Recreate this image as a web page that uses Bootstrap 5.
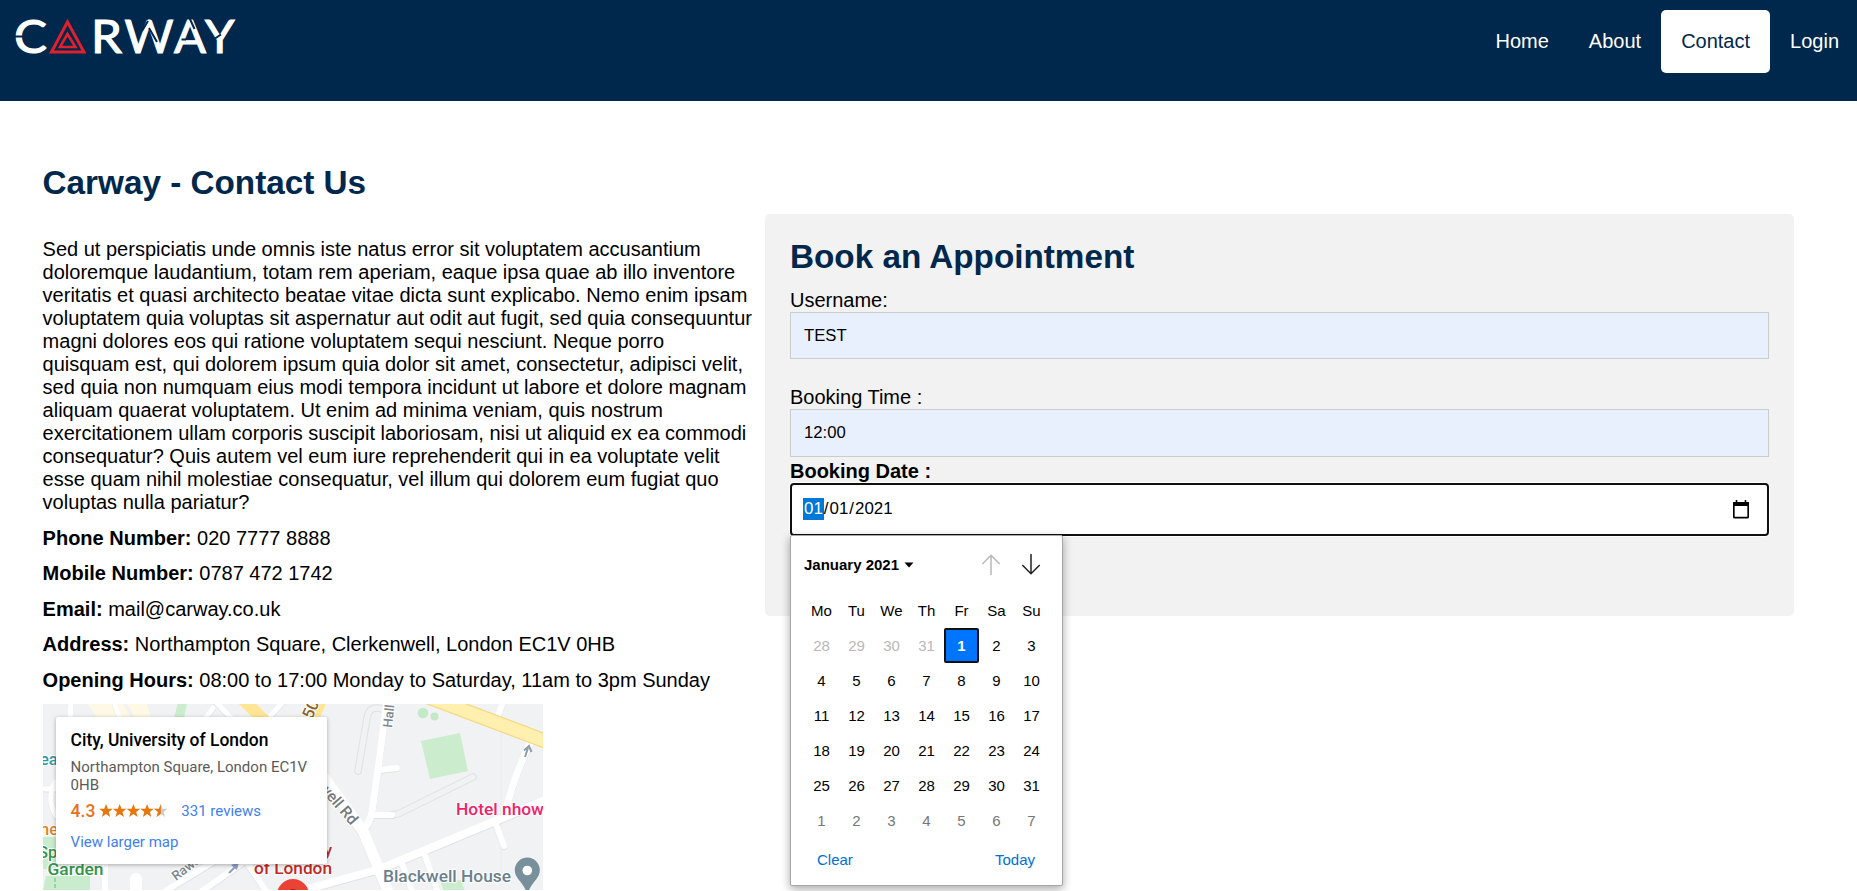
<!DOCTYPE html>
<html lang="en">
<head>
<meta charset="utf-8">
<title>Carway - Contact Us</title>
<link href="https://cdn.jsdelivr.net/npm/bootstrap@5.3.0/dist/css/bootstrap.min.css" rel="stylesheet">
<style>
body{font:20px/23px "Liberation Sans",Arial,sans-serif;color:#000;background:#fff;height:891px;overflow:hidden}
.site-head{background:#00274c;height:101px}
.brand-logo{width:240px;height:80px}
.menu{padding-top:10px;margin-right:-2px}
.menu .nav-link{padding:20px;color:#fff;font-size:20px;line-height:23px;border-radius:5px}
.menu .nav-link.active{background:#fff;color:#00274c}
.info{width:711px;margin-left:42.6px;margin-right:4.4px;padding-top:63px}
h2{color:#00274c;font-size:33.28px;line-height:38px;font-weight:700;margin:0}
.info h2{margin-bottom:36px}
.facts{padding-top:13px;display:grid;row-gap:12.4px;margin-bottom:12.4px}
b{font-weight:700}
.map-box{width:500px;height:186px;background:#f1f2f4}
.map-box svg{display:block}
.place{left:13px;top:13px;width:271px;height:147px;background:#fff;border-radius:2px;box-shadow:0 1px 4px rgba(0,0,0,.3);padding:12px 15px;font-family:Roboto,sans-serif;color:#5b5b5b;font-size:15px;line-height:18px}
.place .ttl{font-size:17.45px;line-height:22px;font-weight:500;color:#000;margin-bottom:7px}
.place a{color:#427fed;text-decoration:none}
.rate{color:#e7711b;font-size:17.5px;font-weight:500}
.book{width:1029px;height:402px;margin:113px 0 0 7px;background:#f2f2f2;border-radius:5px;padding:24px 25px}
.book h2{margin-bottom:13px}
.book label{display:block}
.book .form-control{font-size:16.7px;line-height:19px;color:#000;border:1px solid #ccc;border-radius:0;background:#e8f0fe;padding:13px;height:47px}
.book .time-field{height:48px}
.book .date-field{background:#fff;border:2px solid #101010;border-radius:4px;height:53px;padding:0 18px 2px 11px;box-shadow:0 0 0 1px #fff;font-size:16.9px}
.seg{padding:1px;line-height:20px}
.seg.on{background:#0078d7;color:#fff}
.picker{left:0;top:52px;width:273px;height:351px;background:#fff;border:1px solid #a6a6a6;border-radius:2px;box-shadow:0 3px 10px rgba(0,0,0,.35);font-size:15px;line-height:17px;z-index:5}
.picker-top{height:57px;padding:0 21px 0 13px}
.days{display:grid;grid-template-columns:repeat(7,35px);grid-auto-rows:35px;padding-left:13px}
.days span{display:flex;align-items:center;justify-content:center}
.days .off{color:#b8b8b8}.days .next{color:#767676}
.days .sel{background:#0075ff;border:2px solid #101010;border-radius:2px;color:#fff;font-weight:700}
.picker-foot{color:#0070cf;padding:13px 27px 0 26px}
</style>
</head>
<body>
<header class="site-head d-flex justify-content-between align-items-start">
  <a href="#" aria-label="Carway"><svg class="brand-logo d-block" viewBox="0 0 240 80">
    <g font-family="Lato, sans-serif" font-size="46" fill="#fff" stroke="#fff" stroke-width="1.100">
      <text x="14" y="53" textLength="33" lengthAdjust="spacingAndGlyphs">C</text>
      <text x="91" y="53" textLength="31" lengthAdjust="spacingAndGlyphs">R</text>
      <text x="124.500" y="53" textLength="49" lengthAdjust="spacingAndGlyphs">W</text>
      <text x="174" y="53" textLength="32" lengthAdjust="spacingAndGlyphs">A</text>
      <text x="205" y="53" textLength="29.500" lengthAdjust="spacingAndGlyphs">Y</text>
    </g>
    <g fill="none" stroke="#e0202c"><path d="M67.500 22 51.500 52H84Z" stroke-width="3"/><path d="M67.500 34 60 47H75.500Z" stroke-width="2.600"/></g>
    <g stroke="#00274c" stroke-width="2"><path d="M14 36.500h9M103.500 41v7M142 31l6-10M157 42l-8-14M181.500 39.500h4.500M189.500 18l5 11M215 38.500l6-4"/></g>
  </svg></a>
  <nav class="menu nav">
    <a class="nav-link" href="#">Home</a><a class="nav-link" href="#">About</a><a class="nav-link active" href="#">Contact</a><a class="nav-link" href="#">Login</a>
  </nav>
</header>
<main class="d-flex align-items-start">
  <section class="info flex-shrink-0">
    <h2>Carway - Contact Us</h2>
    <p class="m-0">Sed ut perspiciatis unde omnis iste natus error sit voluptatem accusantium doloremque laudantium, totam rem aperiam, eaque ipsa quae ab illo inventore veritatis et quasi architecto beatae vitae dicta sunt explicabo. Nemo enim ipsam voluptatem quia voluptas sit aspernatur aut odit aut fugit, sed quia consequuntur magni dolores eos qui ratione voluptatem sequi nesciunt. Neque porro quisquam est, qui dolorem ipsum quia dolor sit amet, consectetur, adipisci velit, sed quia non numquam eius modi tempora incidunt ut labore et dolore magnam aliquam quaerat voluptatem. Ut enim ad minima veniam, quis nostrum exercitationem ullam corporis suscipit laboriosam, nisi ut aliquid ex ea commodi consequatur? Quis autem vel eum iure reprehenderit qui in ea voluptate velit esse quam nihil molestiae consequatur, vel illum qui dolorem eum fugiat quo voluptas nulla pariatur?</p>
    <div class="facts">
      <div><b>Phone Number:</b> 020 7777 8888</div>
      <div><b>Mobile Number:</b> 0787 472 1742</div>
      <div><b>Email:</b> mail@carway.co.uk</div>
      <div><b>Address:</b> Northampton Square, Clerkenwell, London EC1V 0HB</div>
      <div><b>Opening Hours:</b> 08:00 to 17:00 Monday to Saturday, 11am to 3pm Sunday</div>
    </div>
    <div class="map-box position-relative overflow-hidden">
      <svg width="500" height="186" viewBox="0 0 500 186" font-family="Roboto, sans-serif">
        <defs><g id="streets" fill="none" stroke-linecap="round" stroke-linejoin="round">
          <path d="M240 30 282 75 320 127 347 192" stroke-width="11"/>
          <path d="M344-5 335 65 329 108Q327 118 320 127" stroke-width="7"/>
          <path d="M337 66 354 64M332 111H349M452 118 461 142M461-5 454 15M382 152 396 192M359 160 371 192" stroke-width="6"/>
          <path d="M505 95 450 118 337 165 290 178 240 192" stroke-width="8"/>
          <path d="M487 39Q470 75 462 110" stroke-width="7"/>
          <path d="M172-3 188 14M170 4 160 18M222 18 242-4M28-5 27 20M70-5 78 18M2 85H14M12 78Q3 95 13 112" stroke-width="5"/>
          <path d="M124 186 175 155 210 145M62 160V192M90 192V177Q90 172 93 172Q96 172 96 177V192M155 190 205 155M205 160 226 192" stroke-width="6"/>
        </g></defs>
        <rect width="500" height="186" fill="#f1f2f4"/>
        <path d="M45 0H80L88 14H54ZM84 0H104L108 14H92Z" fill="#fff8e4"/>
        <path d="M0 133H14V165H0ZM3 172H47V186H0Z" fill="#c9ecce"/>
        <path d="M135-1H144L141 14H131ZM378 37 417 29 425 67 387 75ZM397 177 418 176 422 187H401Z" fill="#cbedcd"/>
        <circle cx="380" cy="9" r="5.300" fill="#c3e9c6"/><circle cx="391.500" cy="12.500" r="4" fill="#c3e9c6"/>
        <g fill="none" stroke-linecap="round"><path d="M339 5Q326 1 324 14L315 67M349 111 355 110 430 73" stroke="#dfe1e6" stroke-width="7.500"/><path d="M339 5Q326 1 324 14L315 67M349 111 355 110 430 73" stroke="#f1f2f4" stroke-width="5.500"/></g>
        <path d="M458 0V186" stroke="#ebecef"/>
        <g transform="translate(0 1)"><use href="#streets" stroke="#dddfe6" opacity=".85"/></g>
        <use href="#streets" stroke="#fff"/>
        <path d="M380-9 510 40" stroke="#f7d77e" stroke-width="15"/><path d="M380-9 510 40" stroke="#fff0b0" stroke-width="12.500"/>
        <path d="M192-12 222 17M280-8 270 14" stroke="#ffe594" stroke-width="12"/>
        <path d="M12 174V186" stroke="#65bd76" stroke-dasharray="4 2"/>
        <path d="M482 53 485 44M481 46.500 486 42 488.500 48" fill="none" stroke="#8e9cab" stroke-width="2"/>
        <path d="M186 169 193 162" stroke="#8b9fc7" stroke-width="2"/><path d="M196 158 194 166 188 161Z" fill="#8b9fc7"/>
        <g stroke="#fff" stroke-width="2" paint-order="stroke" stroke-linejoin="round" font-size="16.500" font-weight="500">
          <text x="-3" y="61" fill="#2999a1">ea</text>
          <text x="-3" y="131" fill="#dd8427">ne</text>
          <text x="-5" y="154" fill="#34934b">Sp</text>
          <text x="4.500" y="171" textLength="56" lengthAdjust="spacingAndGlyphs" fill="#34934b">Garden</text>
          <text transform="translate(133 177) rotate(-37)" font-size="13" fill="#80868b">Rawst</text>
          <text transform="translate(269 16) rotate(-66)" fill="#8a6230">50</text>
          <text transform="translate(349 24) rotate(-84)" font-size="13" fill="#80868b">Hall</text>
          <text transform="translate(270 78) rotate(49)" fill="#747a80" font-size="15.500">swell Rd</text>
          <text x="289" y="152" text-anchor="end" fill="#c5281f">City</text>
          <text x="211" y="169.500" textLength="78" lengthAdjust="spacingAndGlyphs" fill="#c5281f">of London</text>
          <text x="413" y="110.500" textLength="88" lengthAdjust="spacingAndGlyphs" fill="#ed246d">Hotel nhow</text>
          <text x="340" y="178" textLength="128" lengthAdjust="spacingAndGlyphs" fill="#6b7f8a">Blackwell House</text>
        </g>
        <circle cx="250" cy="191" r="16" fill="#ea4335"/><circle cx="250" cy="190" r="5" fill="#b31412"/>
        <path d="M484.300 153.500A12.500 12.500 0 0 1 496.800 166C496.800 175 489 177 484.300 190C480 177 471.800 175 471.800 166A12.500 12.500 0 0 1 484.300 153.500Z" fill="#78909c"/><circle cx="484.300" cy="166.500" r="4.800" fill="#fff"/>
      </svg>
      <div class="place position-absolute">
        <div class="ttl">City, University of London</div>
        <div class="text-nowrap">Northampton Square, London EC1V<br>0HB</div>
        <div class="d-flex align-items-center" style="margin-top:8px"><span class="rate">4.3</span>
          <svg class="ms-1" width="70" height="14" viewBox="0 0 70 14"><defs><path id="st" d="M7 0 8.800 4.800H13.800L9.800 7.900 11.200 13 7 10.100 2.800 13 4.200 7.900.2 4.800H5.200Z"/></defs>
          <g fill="#e7760b"><use href="#st"/><use href="#st" x="13.700"/><use href="#st" x="27.400"/><use href="#st" x="41.100"/></g><use href="#st" x="54.800" fill="#ccc"/><path d="M61.800 0V10.100L57.600 13 59 7.900 55 4.800H60Z" fill="#e7760b"/></svg>
          <a href="#" style="margin-left:12px">331 reviews</a></div>
        <div style="margin-top:13px"><a href="#">View larger map</a></div>
      </div>
    </div>
  </section>
  <section class="book flex-shrink-0">
    <h2>Book an Appointment</h2>
    <label for="u">Username:</label>
    <input id="u" class="form-control" value="TEST">
    <label for="t" style="margin-top:27px">Booking Time :</label>
    <input id="t" class="form-control time-field" value="12:00">
    <label class="fw-bold" style="margin-top:3px">Booking Date :</label>
    <div class="position-relative">
      <div class="form-control date-field d-flex align-items-center">
        <span class="seg on">01</span>/<span class="seg">01</span>/<span class="seg">2021</span>
        <svg class="ms-auto" style="margin-top:2px" width="16" height="19" viewBox="0 0 16 19"><path d="M3.500 0V3M12.500 0V3" stroke="#000" stroke-width="1.600"/><rect x=".8" y="2.800" width="14.400" height="14.800" rx="1" fill="none" stroke="#000" stroke-width="1.700"/><path d="M0 2H16V6H0Z"/></svg>
      </div>
      <div class="picker position-absolute">
        <div class="picker-top d-flex align-items-center"><b>January 2021</b>
          <svg style="margin-left:5px" width="10" height="6" viewBox="0 0 10 6"><path d="M.5.5H9.500L5 5.500Z"/></svg>
          <svg class="ms-auto" width="20" height="21" viewBox="0 0 20 21" fill="none" stroke="#b8b8b8" stroke-width="1.500"><path d="M10 21V1.500M1.300 10 10 1.300 18.700 10"/></svg>
          <svg style="margin-left:20px" width="20" height="21" viewBox="0 0 20 21" fill="none" stroke="#222" stroke-width="1.500"><path d="M10 0V19.500M1.300 11 10 19.700 18.700 11"/></svg>
        </div>
        <div class="days">
          <span>Mo</span><span>Tu</span><span>We</span><span>Th</span><span>Fr</span><span>Sa</span><span>Su</span>
          <span class="off">28</span><span class="off">29</span><span class="off">30</span><span class="off">31</span><span class="sel">1</span><span>2</span><span>3</span>
          <span>4</span><span>5</span><span>6</span><span>7</span><span>8</span><span>9</span><span>10</span>
          <span>11</span><span>12</span><span>13</span><span>14</span><span>15</span><span>16</span><span>17</span>
          <span>18</span><span>19</span><span>20</span><span>21</span><span>22</span><span>23</span><span>24</span>
          <span>25</span><span>26</span><span>27</span><span>28</span><span>29</span><span>30</span><span>31</span>
          <span class="next">1</span><span class="next">2</span><span class="next">3</span><span class="next">4</span><span class="next">5</span><span class="next">6</span><span class="next">7</span>
        </div>
        <div class="picker-foot d-flex justify-content-between"><span>Clear</span><span>Today</span></div>
      </div>
    </div>
  </section>
</main>
<script src="https://cdn.jsdelivr.net/npm/bootstrap@5.3.0/dist/js/bootstrap.bundle.min.js"></script>
</body>
</html>
